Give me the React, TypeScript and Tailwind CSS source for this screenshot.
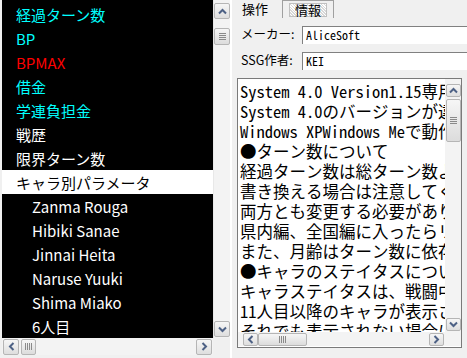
import React from "react";

const listFont = { fontFamily: '"Noto Sans CJK JP", "Noto Sans", sans-serif' };
const monoFont = { fontFamily: '"Noto Sans Mono CJK JP", "Noto Sans CJK JP", monospace' };

type Dir = "up" | "down" | "left" | "right";

const Chevron = ({ dir }: { dir: Dir }) => {
  const rot = { up: "rotate-0", down: "rotate-180", left: "-rotate-90", right: "rotate-90" }[dir];
  return (
    <svg width="9" height="9" viewBox="0 0 9 9" className={rot}>
      <path d="M1 6.5 L4.5 3 L8 6.5" stroke="#4d6185" strokeWidth="2" fill="none" />
    </svg>
  );
};

const ScrollBtn = ({ dir, size = "w-[16px] h-[16px]" }: { dir: Dir; size?: string }) => (
  <div className={`${size} shrink-0 flex items-center justify-center rounded-[2px] border border-[#b5b5b5] bg-gradient-to-b from-[#f6f6f6] to-[#dedede]`}>
    <Chevron dir={dir} />
  </div>
);

const Thumb = ({ vertical, className }: { vertical?: boolean; className: string }) => (
  <div
    className={`shrink-0 flex items-center justify-center rounded-[2px] border border-[#b5b5b5] bg-gradient-to-b from-[#f6f6f6] to-[#dcdcdc] ${className}`}
  >
    {vertical ? (
      <div className="flex flex-col gap-[1px]">
        <div className="w-[7px] h-[1px] bg-[#8a8a8a]" />
        <div className="w-[7px] h-[1px] bg-[#8a8a8a]" />
        <div className="w-[7px] h-[1px] bg-[#8a8a8a]" />
        <div className="w-[7px] h-[1px] bg-[#8a8a8a]" />
      </div>
    ) : (
      <div className="flex gap-[1px]">
        <div className="w-[1px] h-[7px] bg-[#8a8a8a]" />
        <div className="w-[1px] h-[7px] bg-[#8a8a8a]" />
        <div className="w-[1px] h-[7px] bg-[#8a8a8a]" />
        <div className="w-[1px] h-[7px] bg-[#8a8a8a]" />
      </div>
    )}
  </div>
);

const rows: { text: string; color: string; indent?: boolean; selected?: boolean }[] = [
  { text: "経過ターン数", color: "text-[#00ffff]" },
  { text: "BP", color: "text-[#00ffff]" },
  { text: "BPMAX", color: "text-[#ff0000]" },
  { text: "借金", color: "text-[#00ffff]" },
  { text: "学連負担金", color: "text-[#00ffff]" },
  { text: "戦歴", color: "text-white" },
  { text: "限界ターン数", color: "text-white" },
  { text: "キャラ別パラメータ", color: "text-black", selected: true },
  { text: "Zanma Rouga", color: "text-white", indent: true },
  { text: "Hibiki Sanae", color: "text-white", indent: true },
  { text: "Jinnai Heita", color: "text-white", indent: true },
  { text: "Naruse Yuuki", color: "text-white", indent: true },
  { text: "Shima Miako", color: "text-white", indent: true },
  { text: "6人目", color: "text-white", indent: true },
];

const infoLines = [
  "System 4.0 Version1.15専用です。",
  "System 4.0のバージョンが違うと動きません。",
  "Windows XPWindows Meで動作確認しています。",
  "●ターン数について",
  "経過ターン数は総ターン数より小さくしてください。",
  "書き換える場合は注意してください。",
  "両方とも変更する必要があります。",
  "県内編、全国編に入ったらリセットされます。",
  "また、月齢はターン数に依存しています。",
  "●キャラのステイタスについて",
  "キャラステイタスは、戦闘中のみ有効です。",
  "11人目以降のキャラが表示されない場合があります。",
  "それでも表示されない場合には再読込してください。",
];

export default function App() {
  return (
    <div className="w-[467px] h-[358px] bg-[#f0f0f0] flex overflow-hidden select-none">
      {/* left tree */}
      <div className="w-[230px] shrink-0 h-full flex flex-col pl-[2px] pb-[3px] bg-[#f0f0f0]">
        <div className="flex flex-1 min-h-0">
          <div className="flex-1 min-w-0 bg-black pt-[2px] overflow-hidden" style={listFont}>
            {rows.map((r) => (
              <div
                key={r.text}
                className={`h-[24px] flex items-center text-[15px] leading-none whitespace-nowrap ${r.color} ${
                  r.selected ? "bg-white" : ""
                } ${r.indent ? "pl-[30px]" : "pl-[14px]"}`}
              >
                {r.text}
              </div>
            ))}
          </div>
          <div className="w-[17px] shrink-0 bg-[#f3f3f3] flex flex-col items-center pt-[3px] pb-[1px] border-l border-[#e8e8e8]">
            <ScrollBtn dir="up" />
            <Thumb vertical className="w-[16px] h-[17px] mt-[9px]" />
            <div className="flex-1" />
            <ScrollBtn dir="down" />
          </div>
        </div>
        <div className="h-[17px] shrink-0 flex bg-[#f3f3f3]">
          <div className="flex-1 flex items-center pl-[1px] pr-[1px]">
            <ScrollBtn dir="left" />
            <Thumb className="w-[15px] h-[16px] ml-[2px]" />
            <div className="flex-1" />
            <ScrollBtn dir="right" />
          </div>
          <div className="w-[17px] bg-[#f0f0f0]" />
        </div>
      </div>

      {/* splitter */}
      <div className="w-[6px] shrink-0 h-full border-l-2 border-white" />

      {/* right panel */}
      <div className="flex-1 min-w-0 h-full flex flex-col" style={listFont}>
        <div className="h-[18px] shrink-0 flex items-end text-[13px] text-black">
          <div className="pl-[6px] w-[46px] h-[18px] flex items-center">操作</div>
          <div className="w-[52px] h-[18px] border-x border-t border-[#a0a0a0] bg-[#f0f0f0] flex items-center justify-center">
            <div className="w-[38px] h-[14px] flex items-center justify-center bg-[repeating-linear-gradient(45deg,#d8d8d8_0px,#d8d8d8_1px,#ffffff_1px,#ffffff_2px)] border border-[#c0c0c0]">
              情報
            </div>
          </div>
        </div>

        <div className="flex shrink-0 items-center mt-[7px] h-[19px]">
          <div className="w-[66px] pl-[5px] text-[12.5px] text-black whitespace-nowrap">メーカー:</div>
          <div className="flex-1 h-[18px] bg-white border-t border-l border-[#808080] pl-[3px] flex items-center text-[12px] text-black" style={monoFont}>
            AliceSoft
          </div>
        </div>
        <div className="flex shrink-0 items-center mt-[7px] h-[19px]">
          <div className="w-[66px] pl-[5px] text-[12.5px] text-black whitespace-nowrap">SSG作者:</div>
          <div className="flex-1 h-[18px] bg-white border-t border-l border-[#808080] pl-[3px] flex items-center text-[12px] text-black" style={monoFont}>
            KEI
          </div>
        </div>

        <div className="mt-[8px] h-[270px] shrink-0 ml-[1px] mr-[5px] flex flex-col bg-white border border-[#7a7a7a]">
          <div className="flex flex-1 min-h-0">
            <div className="flex-1 min-w-0 overflow-hidden pl-[2px] pt-[2px] text-[16.5px] leading-[20px] text-black" style={monoFont}>
              {infoLines.map((l) => (
                <div key={l} className="whitespace-nowrap">
                  {l}
                </div>
              ))}
            </div>
            <div className="w-[16px] shrink-0 bg-[#f3f3f3] flex flex-col items-center pt-[5px] pb-[1px]">
              <ScrollBtn dir="up" size="w-[15px] h-[13px]" />
              <Thumb vertical className="w-[15px] h-[43px] mt-[2px]" />
              <div className="flex-1" />
              <ScrollBtn dir="down" size="w-[15px] h-[13px]" />
            </div>
          </div>
          <div className="h-[14px] shrink-0 flex bg-[#f3f3f3] items-center mb-[1px]">
            <div className="flex-1 flex items-center pl-[5px] pr-[1px]">
              <ScrollBtn dir="left" size="w-[15px] h-[13px]" />
              <Thumb className="w-[49px] h-[13px]" />
              <div className="flex-1" />
              <ScrollBtn dir="right" size="w-[15px] h-[13px]" />
            </div>
            <div className="w-[16px]" />
          </div>
        </div>
      </div>
    </div>
  );
}
